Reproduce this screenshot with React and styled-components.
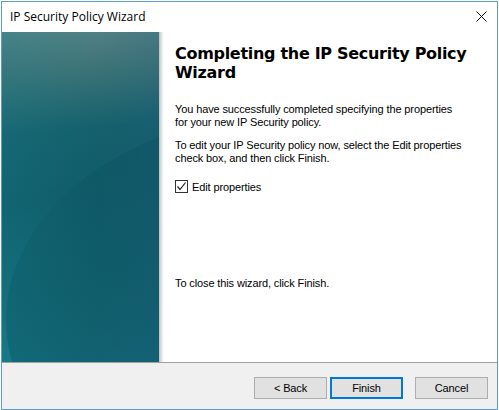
import React from "react";
import styled, { createGlobalStyle } from "styled-components";

const Global = createGlobalStyle`
  html, body { margin: 0; padding: 0; background: #ffffff; }
  body { width: 499px; height: 410px; overflow: hidden; }
`;

const Window = styled.div`
  box-sizing: border-box;
  width: 497px;
  height: 409px;
  margin: 1px 0 0 1px;
  border: 1px solid #5b9bd8;
  display: flex;
  flex-direction: column;
  background: #f0f0f0;
  font-family: "Liberation Sans", Arial, sans-serif;
`;

const TitleBar = styled.div`
  height: 30px;
  flex: none;
  background: #ffffff;
  display: flex;
  align-items: center;
  justify-content: space-between;
  padding: 0 9px 0 8px;
`;

const Title = styled.span`
  font-family: "Open Sans", "Noto Sans", sans-serif;
  font-size: 12px;
  color: #000;
  margin-top: -2px;
`;

const CloseBtn = styled.svg`
  width: 11px;
  height: 11px;
  margin-right: 1px;
  margin-top: -1px;
`;

const Main = styled.div`
  height: 330px;
  flex: none;
  display: flex;
  background: #ffffff;
`;

const Banner = styled.div`
  width: 157px;
  flex: none;
  position: relative;
  overflow: hidden;
  background: linear-gradient(175deg, #558386 0%, #3f7478 12%, #15606c 30%, #105b69 50%, #146a79 80%, #177b87 100%);
  &::before {
    content: "";
    position: absolute;
    left: 4px;
    top: 78px;
    width: 600px;
    height: 420px;
    border-radius: 50%;
    background: linear-gradient(180deg, #0f5663 0%, #0f5b69 40%, #146a7a 100%);
    opacity: 0.92;
  }
  &::after {
    content: "";
    position: absolute;
    inset: 0;
    background: linear-gradient(90deg, rgba(20,130,140,0.25) 0%, rgba(0,0,0,0) 60%, rgba(30,90,130,0.15) 100%);
  }
`;

const Shade = styled.div`
  width: 5px;
  flex: none;
  background: linear-gradient(90deg, #b8c0c2 0%, #e4e4e4 50%, #ffffff 100%);
`;

const Content = styled.div`
  flex: 1;
  padding: 12px 20px 0 11px;
  display: flex;
  flex-direction: column;
`;

const Heading = styled.h1`
  margin: 0;
  font-family: "DejaVu Sans", Verdana, sans-serif;
  font-weight: bold;
  font-size: 16px;
  line-height: 19px;
  color: #000;
  letter-spacing: -0.3px;
`;

const Para = styled.p`
  margin: ${p => p.$top}px 0 0 0;
  font-size: 11px;
  letter-spacing: -0.12px;
  line-height: 13px;
  color: #000;
`;

const CheckRow = styled.label`
  margin-top: 15px;
  display: flex;
  align-items: center;
  gap: 4px;
  font-size: 11px;
  letter-spacing: -0.12px;
  color: #000;
`;

const Box = styled.span`
  box-sizing: border-box;
  width: 13px;
  height: 13px;
  border: 1px solid #333;
  background: #fff;
  display: flex;
  align-items: center;
  justify-content: center;
`;

const Separator = styled.div`
  height: 1px;
  flex: none;
  background: #a0a0a0;
`;

const Footer = styled.div`
  flex: 1;
  display: flex;
  justify-content: flex-end;
  align-items: flex-start;
  padding: 14px 9px 0 0;
  gap: 3px;
`;

const Button = styled.button`
  box-sizing: border-box;
  width: 73px;
  height: 22px;
  margin-left: ${p => p.$gap || 0}px;
  padding: 0;
  font-family: "Liberation Sans", Arial, sans-serif;
  font-size: 11px;
  letter-spacing: -0.12px;
  color: #000;
  background: #e1e1e1;
  border: ${p => (p.$primary ? "2px solid #0078d7" : "1px solid #adadad")};
`;

export default function App() {
  return (
    <>
      <Global />
      <Window>
        <TitleBar>
          <Title>IP Security Policy Wizard</Title>
          <CloseBtn viewBox="0 0 11 11">
            <path d="M0.5 0.5 L10.5 10.5 M10.5 0.5 L0.5 10.5" stroke="#111" strokeWidth="1" fill="none" />
          </CloseBtn>
        </TitleBar>
        <Main>
          <Banner />
          <Shade />
          <Content>
            <Heading>Completing the IP Security Policy Wizard</Heading>
            <Para $top={21}>
              You have successfully completed specifying the properties
              <br />
              for your new IP Security policy.
            </Para>
            <Para $top={10}>
              To edit your IP Security policy now, select the Edit properties
              <br />
              check box, and then click Finish.
            </Para>
            <CheckRow>
              <Box>
                <svg width="11" height="11" viewBox="0 0 11 11">
                  <path d="M1.5 5.5 L4 8.5 L9.5 1.5" stroke="#222" strokeWidth="1.2" fill="none" />
                </svg>
              </Box>
              Edit properties
            </CheckRow>
            <Para $top={84}>To close this wizard, click Finish.</Para>
          </Content>
        </Main>
        <Separator />
        <Footer>
          <Button>&lt; Back</Button>
          <Button $primary>Finish</Button>
          <Button $gap={9}>Cancel</Button>
        </Footer>
      </Window>
    </>
  );
}
